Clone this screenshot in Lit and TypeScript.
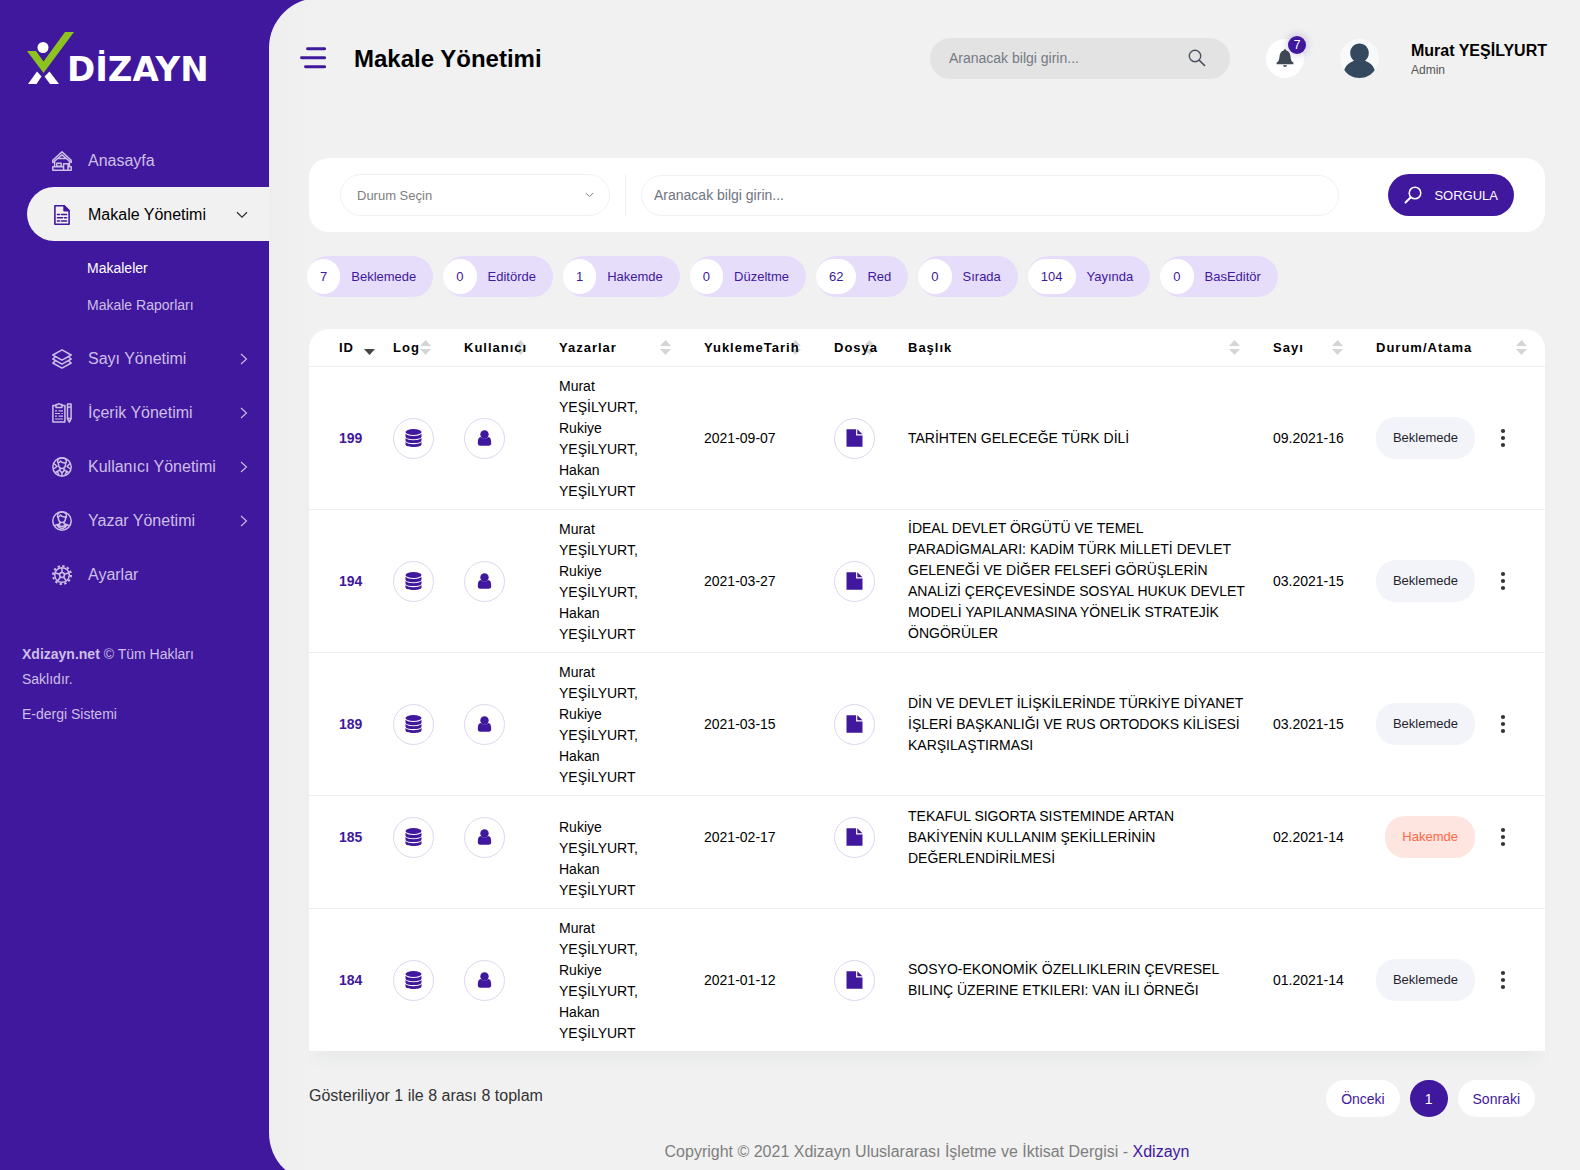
import { LitElement, html, css, svg, nothing } from "lit";
import { customElement, property } from "lit/decorators.js";
import { classMap } from "lit/directives/class-map.js";

type IconName =
  | "home" | "doc" | "layers" | "clipboard" | "users" | "author" | "gear"
  | "right" | "down" | "search" | "loupe" | "bell" | "database" | "person"
  | "file" | "dots" | "burger" | "avatar";

const ICONS: Record<IconName, { box: string; body: unknown }> = {
  home: {
    box: "0 0 20 20",
    body: svg`<g fill="none" stroke="currentColor" stroke-width="1.5" stroke-linejoin="round" stroke-linecap="round">
      <path d="M.8 9.2 10 .9l9.200 8.300v2.300L10 3.800.800 11.500z"/>
      <path d="M2.600 10.400v5.400M17.400 10.400v5.400M.800 15.700h10M.800 19.200h18.400v-3.400h-3.200M.800 15.700v3.500M11.600 19v-6.200h4.400V19M4.800 12.300h4.400v2.900H4.800zM6.500 7.500h7"/></g>`,
  },
  doc: {
    box: "0 0 20 20",
    body: svg`<g fill="none" stroke="currentColor" stroke-width="1.600" stroke-linejoin="round" stroke-linecap="round">
      <path d="M2.900.800h9.200l5 5v13.400H2.900z"/><path d="M12.100.800v5h5z" fill="currentColor"/>
      <path d="M5.500 9.500h2M9.500 9.500h5M5.500 12.800h5M12.500 12.800h2M5.500 16h2M9.500 16h5"/></g>`,
  },
  layers: {
    box: "0 0 20 20",
    body: svg`<g fill="none" stroke="currentColor" stroke-width="1.500" stroke-linejoin="round">
      <path d="M10 .900 19.200 6 10 11.100.800 6z"/>
      <path d="M3.500 7.700.800 10 10 15.100 19.200 10l-2.700-2.300"/>
      <path d="M3.500 11.800.800 14 10 19.200 19.200 14l-2.700-2.200"/></g>`,
  },
  clipboard: {
    box: "0 0 20 20",
    body: svg`<g fill="none" stroke="currentColor" stroke-width="1.500" stroke-linejoin="round">
      <path d="M4 2.500H.900v16.600h12V2.500H9.800"/><path d="M4 1.500h1.500Q7 0 8.400 1.500h1.500v3H4z"/>
      <path d="M3 7.800h2M6.500 7.800h4.500M3 10.500h5M9.500 10.500h1.500M3 13.200h2M6.500 13.200h4.500M3 16h8" stroke-width="1.200"/>
      <path d="M15.500 1h3.600v14.800l-1.800 3.300-1.800-3.300zM15.500 4h3.600M15.500 15.500h3.600"/></g>`,
  },
  users: {
    box: "0 0 20 20",
    body: svg`<g fill="none" stroke="currentColor" stroke-width="1.500" stroke-linejoin="round">
      <circle cx="10" cy="10" r="9.200"/><path d="M6.300 5.800c0 3.800 1.700 5.800 3.700 5.800s3.700-2 3.700-5.800q-4 .500-5.200-1.800-.700 1.600-2.200 1.800z"/>
      <path d="M5.800 6C4.800 2.500 7 1 10 1s5.200 1.500 4.200 5M8.300 11l-.600 2.200L10 16l2.300-2.800-.600-2.200M7.700 13 3.500 15.500M12.300 13l4.200 2.500M10 15.500V19M5 14l2 4M15 14l-2 4"/>
      <path d="M2 6.500 5 9.500 1.500 12M18 6.500l-3 3 3.500 2.500"/></g>`,
  },
  author: {
    box: "0 0 20 20",
    body: svg`<g fill="none" stroke="currentColor" stroke-width="1.500" stroke-linejoin="round">
      <circle cx="10" cy="10" r="9.200"/><path d="M6.300 5.800c0 3.800 1.700 5.800 3.700 5.800s3.700-2 3.700-5.800q-4 .500-5.200-1.800-.700 1.600-2.200 1.800z"/>
      <path d="M5.800 7C4.500 2.800 7 1 10 1s5.500 1.800 4.200 6M8 11v1.700L2.800 14.500M12 11v1.700l5.200 1.800M6 13.500q4 4 8 0M5 14q5 7 10 0"/></g>`,
  },
  gear: {
    box: "0 0 20 20",
    body: svg`<g fill="none" stroke="currentColor" stroke-width="1.500">
      <circle cx="10" cy="10" r="7.300"/><circle cx="10" cy="10" r="2.400"/>
      <circle cx="10" cy="10" r="9" stroke-width="2" stroke-dasharray="2.350 2.362"/>
      <path d="M10 7.500v-5M12.400 9.200l4.700-1.500M11.500 12l2.900 4M8.500 12l-2.900 4M7.600 9.200 2.900 7.700"/></g>`,
  },
  right: {
    box: "0 0 8 12",
    body: svg`<path d="M1 1l5.500 5L1 11" fill="none" stroke="currentColor" stroke-width="1.100"/>`,
  },
  down: {
    box: "0 0 12 8",
    body: svg`<path d="M1 1.200l5 5 5-5" fill="none" stroke="currentColor" stroke-width="1.300"/>`,
  },
  search: {
    box: "0 0 18 18",
    body: svg`<g fill="none" stroke="currentColor" stroke-width="1.400"><circle cx="7" cy="7" r="5.700"/><path d="M11 11l6 6" stroke-width="1.700"/></g>`,
  },
  loupe: {
    box: "0 0 18 18",
    body: svg`<g fill="none" stroke="currentColor" stroke-width="1.500" stroke-linecap="round"><circle cx="11" cy="7" r="5.800"/><path d="M6.500 11.500 1.500 16.500" stroke-width="2"/></g>`,
  },
  bell: {
    box: "0 0 18 18",
    body: svg`<path fill="currentColor" d="M9 .200c.800 0 1.300.500 1.300 1.200 2.800.700 4 3 4.200 6 .200 3.600 1 5 2.900 6.200v1.600H.600v-1.600c1.900-1.200 2.700-2.600 2.900-6.200.200-3 1.400-5.300 4.200-6C7.700.700 8.200.200 9 .200zM7 16.200h4c0 1-.900 1.700-2 1.700s-2-.700-2-1.700z"/>`,
  },
  database: {
    box: "0 0 16 18",
    body: svg`<g fill="currentColor"><ellipse cx="8" cy="3" rx="8" ry="3"/>
      <path d="M0 4.800c1.500 1.600 4.500 2.200 8 2.200S14.500 6.400 16 4.800v2.600C16 9.100 12.400 10.200 8 10.200S0 9.100 0 7.400z"/>
      <path d="M0 9c1.500 1.600 4.500 2.200 8 2.200s6.500-.600 8-2.200v2.400c0 1.700-3.600 2.700-8 2.700s-8-1-8-2.700z"/>
      <path d="M0 13c1.500 1.600 4.500 2.200 8 2.200s6.500-.600 8-2.200v2.200C16 17 12.400 18 8 18s-8-1-8-2.800z"/></g>`,
  },
  person: {
    box: "0 0 14 16",
    body: svg`<g fill="currentColor"><circle cx="7" cy="4.500" r="4.200"/><path d="M3.300 7C1.200 7 .300 9.200.300 13c0 1.800.900 2.700 2.300 2.700h8.800c1.400 0 2.300-.900 2.300-2.700 0-3.800-.900-6-3-6a5.200 5.200 0 0 1-7.400 0z"/></g>`,
  },
  file: {
    box: "0 0 16 18",
    body: svg`<path fill="currentColor" d="M0 .200h9.600v6.200H16v11.400H0zM10.800.200 16 5.200h-5.200z"/>`,
  },
  dots: {
    box: "0 0 24 24",
    body: svg`<g fill="currentColor"><circle cx="12" cy="5" r="2.100"/><circle cx="12" cy="12" r="2.100"/><circle cx="12" cy="19" r="2.100"/></g>`,
  },
  burger: {
    box: "0 0 26 22",
    body: svg`<path d="M7.500 1.700H24.600M1.500 10.800H24.600M5.500 19.800H24.600" stroke="currentColor" stroke-width="2.900" stroke-linecap="round"/>`,
  },
  avatar: {
    box: "0 0 39 39",
    body: svg`<circle cx="19.500" cy="19.500" r="19.500" fill="#f8f9fb"/>
      <path fill="#34495e" d="M19.500 4.500c5.200 0 9.300 4.200 9.300 9.500 0 3.400-1.500 6-3.800 7.700 4.500 1.600 8.400 4.900 9.700 9.300-3 4.800-8.700 8-15.200 8s-12.200-3.200-15.200-8c1.300-4.400 5.200-7.700 9.700-9.300-2.300-1.700-3.800-4.300-3.800-7.700 0-5.300 4.100-9.500 9.300-9.500z"/>`,
  },
};

@customElement("ui-icon")
class UiIcon extends LitElement {
  @property() name: IconName = "home";
  static styles = css`
    :host { display: inline-flex; flex: none; width: 20px; height: 20px; }
    svg { width: 100%; height: 100%; display: block; }
  `;
  render() {
    const icon = ICONS[this.name];
    return html`<svg viewBox=${icon.box} aria-hidden="true">${icon.body}</svg>`;
  }
}

@customElement("side-bar")
class SideBar extends LitElement {
  static styles = css`
    :host { display: block; width: 269px; flex: none; color: #cdbfe8; }
    * { box-sizing: border-box; }
    a { color: inherit; text-decoration: none; }
    .logo { display: flex; align-items: flex-end; height: 101px; padding: 32px 0 16px 27px; color: #fff; }
    .mark { width: 47px; height: 53px; flex: none; margin-right: -7px; }
    .word { font: 700 34px/32px "DejaVu Sans", sans-serif; }
    nav { padding-top: 32px; }
    .item { display: flex; align-items: center; height: 54px; margin-left: 27px; padding: 2px 21px 0 25px; font-size: 16px; }
    .label { flex: 1; padding-left: 16px; }
    .active { background: #f1f1f1; color: #000; border-radius: 27px 0 0 27px; }
    .active .lead { color: #40189d; }
    .active .arrow { width: 12px; height: 8px; color: #333; }
    .arrow { width: 8px; height: 12px; }
    .sub { display: flex; flex-direction: column; padding: 9px 0 7px 87px; }
    .sub a { line-height: 37px; font-size: 14px; }
    .sub .current { color: #fff; }
    .foot { padding: 41px 60px 0 22px; font-size: 14px; line-height: 25px; }
    .foot p { margin: 0 0 10px; }
  `;
  private item(icon: IconName, label: string, arrow?: IconName, active = false) {
    return html`<a href="#" class=${classMap({ item: true, active })}>
      <ui-icon class="lead" name=${icon}></ui-icon><span class="label">${label}</span>
      ${arrow ? html`<ui-icon class="arrow" name=${arrow}></ui-icon>` : nothing}</a>`;
  }
  render() {
    return html`
      <a class="logo" href="#" aria-label="Xdizayn">
        <svg class="mark" viewBox="0 0 47 53" aria-hidden="true">
          <path fill="#8dc21f" d="M38 0h9L16.500 41 0 19h9l7.500 10.500z"/>
          <circle cx="16" cy="15.500" r="5.500" fill="#fff"/>
          <path fill="#fff" d="M10 39.500l4.500 5L9.500 52H1zM22.500 39.500 32 52h-9l-5.500-7.500z"/>
        </svg><span class="word">DİZAYN</span>
      </a>
      <nav>
        ${this.item("home", "Anasayfa")}
        ${this.item("doc", "Makale Yönetimi", "down", true)}
        <div class="sub"><a href="#" class="current">Makaleler</a><a href="#">Makale Raporları</a></div>
        ${this.item("layers", "Sayı Yönetimi", "right")}
        ${this.item("clipboard", "İçerik Yönetimi", "right")}
        ${this.item("users", "Kullanıcı Yönetimi", "right")}
        ${this.item("author", "Yazar Yönetimi", "right")}
        ${this.item("gear", "Ayarlar")}
      </nav>
      <div class="foot"><p><strong>Xdizayn.net</strong> © Tüm Hakları Saklıdır.</p><p>E-dergi Sistemi</p></div>
    `;
  }
}

@customElement("top-bar")
class TopBar extends LitElement {
  static styles = css`
    :host { display: flex; align-items: center; height: 116px; padding: 0 33px 0 31px; }
    * { box-sizing: border-box; }
    button, input { font: inherit; border: 0; margin: 0; padding: 0; background: none; }
    .burger { display: flex; color: #40189d; }
    .burger ui-icon { width: 26px; height: 22px; }
    h1 { margin: 0 auto 0 28px; padding-top: 2px; font-size: 24px; line-height: 32px; color: #000; }
    .search { display: flex; width: 300px; height: 41px; border-radius: 21px; background: #e3e3e3; font-size: 14px; }
    .search input { flex: 1; min-width: 0; padding-left: 19px; outline: none; }
    .search input::placeholder { color: #757a84; opacity: 1; }
    .search button { width: 66px; display: grid; place-items: center; color: #4a5260; }
    .search ui-icon { width: 18px; height: 18px; }
    .bell { position: relative; width: 38px; height: 39px; margin-left: 36px; border-radius: 50%; background: #fff; color: #3e4954; display: grid; place-items: center; }
    .bell ui-icon { width: 18px; height: 18px; }
    .count { position: absolute; top: -3px; right: -2px; width: 18px; height: 18px; border-radius: 50%; background: #40189d; color: #fff; font-size: 12px; line-height: 18px; box-shadow: 0 0 10px rgba(64, 24, 157, 0.3); }
    .me { display: flex; align-items: center; margin-left: 36px; color: #000; text-decoration: none; }
    .me ui-icon { width: 39px; height: 39px; }
    .who { display: flex; flex-direction: column; margin-left: 32px; padding-top: 3px; }
    .who strong { font-size: 16px; line-height: 20px; }
    .who span { font-size: 12px; line-height: 18px; color: #555; }
  `;
  render() {
    return html`
      <button class="burger" aria-label="Menü"><ui-icon name="burger"></ui-icon></button>
      <h1>Makale Yönetimi</h1>
      <div class="search"><input type="text" aria-label="Ara" placeholder="Aranacak bilgi girin..." /><button aria-label="Ara"><ui-icon name="search"></ui-icon></button></div>
      <button class="bell" aria-label="Bildirimler"><ui-icon name="bell"></ui-icon><span class="count">7</span></button>
      <a class="me" href="#"><ui-icon name="avatar"></ui-icon><span class="who"><strong>Murat YEŞİLYURT</strong><span>Admin</span></span></a>
    `;
  }
}

interface Article { id: number; authors: string; date: string; title: string; issue: string; status: string; compact?: boolean; }

const ALL = "Murat YEŞİLYURT, Rukiye YEŞİLYURT, Hakan YEŞİLYURT";
const ARTICLES: Article[] = [
  { id: 199, authors: ALL, date: "2021-09-07", title: "TARİHTEN GELECEĞE TÜRK DİLİ", issue: "09.2021-16", status: "Beklemede" },
  { id: 194, authors: ALL, date: "2021-03-27", title: "İDEAL DEVLET ÖRGÜTÜ VE TEMEL PARADİGMALARI: KADİM TÜRK MİLLETİ DEVLET GELENEĞİ VE DİĞER FELSEFİ GÖRÜŞLERİN ANALİZİ ÇERÇEVESİNDE SOSYAL HUKUK DEVLET MODELİ YAPILANMASINA YÖNELİK STRATEJİK ÖNGÖRÜLER", issue: "03.2021-15", status: "Beklemede" },
  { id: 189, authors: ALL, date: "2021-03-15", title: "DİN VE DEVLET İLİŞKİLERİNDE TÜRKİYE DİYANET İŞLERİ BAŞKANLIĞI VE RUS ORTODOKS KİLİSESİ KARŞILAŞTIRMASI", issue: "03.2021-15", status: "Beklemede" },
  { id: 185, authors: "Rukiye YEŞİLYURT, Hakan YEŞİLYURT", date: "2021-02-17", title: "TEKAFUL SIGORTA SISTEMINDE ARTAN BAKİYENİN KULLANIM ŞEKİLLERİNİN DEĞERLENDİRİLMESİ", issue: "02.2021-14", status: "Hakemde", compact: true },
  { id: 184, authors: ALL, date: "2021-01-12", title: "SOSYO-EKONOMİK ÖZELLIKLERIN ÇEVRESEL BILINÇ ÜZERINE ETKILERI: VAN İLI ÖRNEĞI", issue: "01.2021-14", status: "Beklemede" },
];

const COLUMNS: [string, string][] = [
  ["ID", "c-id"], ["Log", "c-log"], ["Kullanıcı", "c-user"], ["Yazarlar", "c-authors"], ["YuklemeTarih", "c-date"],
  ["Dosya", "c-file"], ["Başlık", "c-title"], ["Sayı", "c-issue"], ["Durum/Atama", "c-status"],
];

@customElement("article-table")
class ArticleTable extends LitElement {
  static styles = css`
    :host { display: block; background: #fff; border-radius: 20px 20px 0 0; box-shadow: 0 14px 16px -6px rgba(62, 73, 84, 0.05); }
    * { box-sizing: border-box; }
    button { font: inherit; border: 0; margin: 0; padding: 0; background: none; color: inherit; }
    table { width: 100%; table-layout: fixed; border-collapse: separate; border-spacing: 0; font-size: 14px; line-height: 21px; color: #000; }
    th { padding: 8px 0 8px 8px; border-bottom: 1px solid #eeeef0; text-align: left; }
    td { height: 143px; padding: 8px; border-bottom: 1px solid #eeeef0; vertical-align: middle; }
    tr:last-child td { border-bottom: 0; height: 142px; }
    .c-id { width: 76px; }
    .c-log { width: 71px; }
    .c-user { width: 95px; }
    .c-authors { width: 145px; }
    .c-date { width: 130px; }
    .c-file { width: 74px; }
    .c-issue { width: 103px; }
    .c-status { width: 177px; }
    th:first-child, td:first-child { padding-left: 30px; }
    .sort { position: relative; display: block; width: 100%; text-align: left; font-size: 13px; font-weight: 700; line-height: 21px; letter-spacing: 1px; white-space: nowrap; }
    .name { position: relative; }
    .marks { position: absolute; top: 3px; right: 25px; width: 11px; height: 15px; }
    .c-status .marks { right: 18px; }
    .c-id .marks { right: 10px; }
    .id { font-weight: 700; color: #40189d; }
    td.authors { padding: 9px 28px 7px 8px; }
    td.title { padding-right: 17px; }
    .compact td { height: 113px; padding-bottom: 38px; }
    .compact td.authors { padding-top: 21px; padding-bottom: 7px; }
    .round { display: grid; place-items: center; width: 41px; height: 41px; border: 1px solid #ddd6ee; border-radius: 50%; color: #40189d; }
    .round ui-icon { width: 17px; height: 18px; }
    .round .small { width: 15px; height: 16px; }
    .status { padding-right: 30px; }
    .actions { display: flex; align-items: center; justify-content: flex-end; gap: 16px; }
    .tag { padding: 0 17px; line-height: 42px; border-radius: 20px; font-size: 13px; background: #f3f4fa; color: #1f1f2e; }
    .tag.warm { background: #ffe5df; color: #ff6746; }
    .more { display: flex; color: #333; }
    .more ui-icon { width: 24px; height: 24px; }
  `;
  render() {
    return html`<table>
      <thead><tr>${COLUMNS.map(([label, cls]) => html`<th class=${cls} scope="col"><button class="sort">
        <svg class="marks" viewBox="0 0 11 15" aria-hidden="true">${cls === "c-id"
          ? svg`<path fill="#444" d="M0 9h11L5.500 15z"/>`
          : svg`<path fill="#d5d5d5" d="M5.500 0 11 6H0zM0 9h11l-5.500 6z"/>`}</svg><span class="name">${label}</span></button></th>`)}</tr></thead>
      <tbody>${ARTICLES.map((a) => html`<tr class=${classMap({ compact: !!a.compact })}>
        <td class="id">${a.id}</td>
        <td><button class="round" aria-label="Log"><ui-icon name="database"></ui-icon></button></td>
        <td><button class="round" aria-label="Kullanıcı"><ui-icon class="small" name="person"></ui-icon></button></td>
        <td class="authors">${a.authors}</td>
        <td>${a.date}</td>
        <td><button class="round" aria-label="Dosya"><ui-icon name="file"></ui-icon></button></td>
        <td class="title">${a.title}</td>
        <td>${a.issue}</td>
        <td class="status"><div class="actions"><span class=${classMap({ tag: true, warm: a.status === "Hakemde" })}>${a.status}</span>
          <button class="more" aria-label="İşlemler"><ui-icon name="dots"></ui-icon></button></div></td>
      </tr>`)}</tbody></table>`;
  }
}

const COUNTS: [number, string][] = [
  [7, "Beklemede"], [0, "Editörde"], [1, "Hakemde"], [0, "Düzeltme"], [62, "Red"], [0, "Sırada"], [104, "Yayında"], [0, "BasEditör"],
];

@customElement("app-root")
class AppRoot extends LitElement {
  static styles = css`
    :host { display: block; font-family: "Liberation Sans", Arial, sans-serif; }
    * { box-sizing: border-box; }
    button, input, select { font: inherit; margin: 0; }
    .shell { display: flex; min-height: 100vh; overflow: hidden; background: #40189d; }
    .main { flex: 1; min-width: 0; margin: -2px 0 -13px; padding-top: 2px; border-radius: 50px 0 0 50px; background: linear-gradient(to right, #eeeeee, #f1f1f1 40px); }
    .content { padding: 42px 35px 19px 40px; }
    .filter { display: flex; align-items: center; padding: 16px 31px; border-radius: 20px; background: #fff; }
    .pick { position: relative; display: flex; width: 270px; }
    .pick select { width: 100%; height: 42px; padding: 0 16px; appearance: none; border: 1px solid #f0f1f5; border-radius: 21px; background: #fff; font-size: 13px; color: #7e7e7e; }
    .pick ui-icon { position: absolute; right: 16px; top: 18px; width: 9px; height: 6px; color: #7e7e7e; pointer-events: none; }
    .rule { width: 1px; height: 41px; margin: 0 15px; background: #eee; }
    .query { flex: 1; min-width: 0; height: 41px; padding: 0 12px; border: 1px solid #f0f1f5; border-radius: 21px; font-size: 14px; outline: none; }
    .query::placeholder { color: #6e7480; opacity: 1; }
    .go { display: flex; align-items: center; gap: 12px; height: 42px; margin-left: 49px; padding: 0 16px; border: 0; border-radius: 21px; background: #40189d; color: #fff; font-size: 13px; }
    .go ui-icon { width: 18px; height: 18px; }
    .pills { display: flex; flex-wrap: wrap; gap: 10px; margin: 24px 0 32px -2px; }
    .pill { display: flex; align-items: center; gap: 11px; height: 41px; padding: 0 17px 0 0; border: 0; border-radius: 21px; background: #e6ddfb; color: #40189d; font-size: 13px; }
    .num { padding: 0 13px; line-height: 35px; border-radius: 18px; background: #fff; }
    .below { display: flex; justify-content: space-between; margin-top: 29px; padding-right: 10px; color: #333; font-size: 16px; line-height: 32px; }
    .pages { display: flex; gap: 10px; }
    .pages button { height: 37px; padding: 0 15px; border: 0; border-radius: 19px; background: #fff; color: #40189d; font-size: 14px; }
    .pages .on { background: #40189d; color: #fff; }
    .copy { margin: 23px 0 0; text-align: center; font-size: 16px; line-height: 24px; color: #7e7e7e; }
    .copy a { color: #40189d; text-decoration: none; }
  `;
  render() {
    return html`<div class="shell">
      <side-bar></side-bar>
      <div class="main">
        <top-bar></top-bar>
        <div class="content">
          <form class="filter">
            <div class="pick"><select aria-label="Durum"><option>Durum Seçin</option></select><ui-icon name="down"></ui-icon></div>
            <span class="rule"></span>
            <input class="query" type="text" aria-label="Arama" placeholder="Aranacak bilgi girin..." />
            <button class="go" type="button"><ui-icon name="loupe"></ui-icon>SORGULA</button>
          </form>
          <div class="pills">${COUNTS.map(([n, label]) => html`<button class="pill"><span class="num">${n}</span>${label}</button>`)}</div>
          <article-table></article-table>
          <div class="below"><span>Gösteriliyor 1 ile 8 arası 8 toplam</span>
            <div class="pages"><button>Önceki</button><button class="on">1</button><button>Sonraki</button></div></div>
          <p class="copy">Copyright © 2021 Xdizayn Uluslararası İşletme ve İktisat Dergisi - <a href="#">Xdizayn</a></p>
        </div>
      </div>
    </div>`;
  }
}
